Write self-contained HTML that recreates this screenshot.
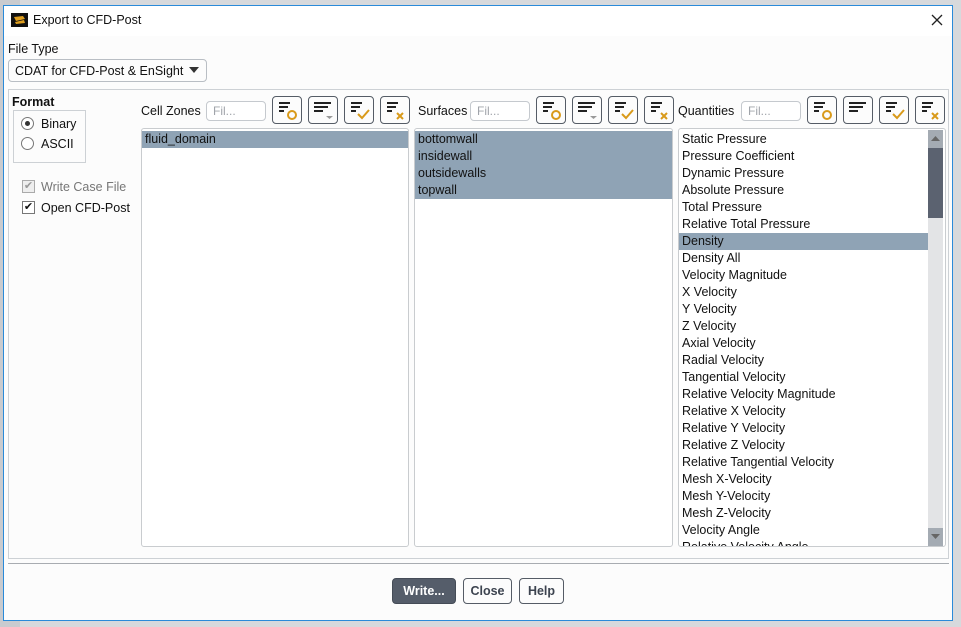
<!DOCTYPE html>
<html><head><meta charset="utf-8"><style>
*{box-sizing:border-box;margin:0;padding:0}
body{width:961px;height:627px;background:#d7d9dc;font-family:"Liberation Sans",sans-serif;font-size:12.5px;color:#111;position:relative;overflow:hidden}
.a{position:absolute}
.dlg{left:3px;top:5px;width:950px;height:616px;background:#fcfcfc;border:1px solid #2a8ad9}
.title{left:0;top:0;width:948px;height:30px;background:#fff}
.btn{position:absolute;width:30px;height:28px;border:1px solid #555c66;border-radius:4px;background:#fcfcfc}
.flt{position:absolute;height:20px;border:1px solid #c5c9ce;border-radius:4px;background:#fff;color:#a0a4aa;padding:2px 6px;font-size:12px}
.list{position:absolute;border:1px solid #c9cccf;border-radius:3px;background:#fff;overflow:hidden;padding-top:2px}
.list div{height:17px;line-height:17px;padding-left:3px;white-space:nowrap}
.sel{background:#8fa3b5}
.pb{position:absolute;top:572px;height:26px;border:1px solid #555c66;border-radius:4px;background:#fcfcfc;font-weight:bold;color:#3d4450;font-size:12.5px;text-align:center;line-height:24px}
</style></head><body>
<div class="a" style="left:0;top:0;width:20px;height:627px;background:#c9cbcf"></div>
<div class="a dlg">
 <div class="a title"></div>
 <div class="a" style="left:7px;top:7px;width:17px;height:14px;background:#111"><svg width="17" height="14"><path d="M3 4 L12 3 L14 6 L5 8Z M4 9 L13 7 L14 10 L5 11Z" fill="#e0a020"/></svg></div>
 <div class="a" style="left:29px;top:7px">Export to CFD-Post</div>
 <svg class="a" style="left:927px;top:8px" width="12" height="12"><path d="M1 1L11 11M11 1L1 11" stroke="#222" stroke-width="1.3"/></svg>
 <div class="a" style="left:4px;top:36px">File Type</div>
 <div class="a" style="left:4px;top:53px;width:199px;height:23px;border:1px solid #b9bec4;border-radius:4px;background:#fcfcfc;padding:4px 6px">CDAT for CFD-Post &amp; EnSight</div>
 <svg class="a" style="left:185px;top:61px" width="10" height="6"><path d="M0 0H10L5 6Z" fill="#333"/></svg>
 <div class="a" style="left:4px;top:83px;width:941px;height:470px;border:1px solid #cdd1d5"></div>
 <div class="a" style="left:8px;top:89px;font-weight:bold">Format</div>
 <div class="a" style="left:9px;top:104px;width:73px;height:53px;border:1px solid #cdd1d5"></div>
 <div class="a" style="left:17px;top:111px;width:13px;height:13px;border:1px solid #777;border-radius:50%;background:#fff"><div class="a" style="left:3px;top:3px;width:5px;height:5px;border-radius:50%;background:#333"></div></div>
 <div class="a" style="left:37px;top:111px">Binary</div>
 <div class="a" style="left:17px;top:131px;width:13px;height:13px;border:1px solid #777;border-radius:50%;background:#fff"></div>
 <div class="a" style="left:37px;top:131px">ASCII</div>
 <div class="a" style="left:18px;top:174px;width:13px;height:13px;border:1px solid #aaa;background:#eee;color:#999;font-size:11px;line-height:11px;text-align:center">✔</div>
 <div class="a" style="left:37px;top:174px;color:#777">Write Case File</div>
 <div class="a" style="left:18px;top:195px;width:13px;height:13px;border:1px solid #777;background:#fff;font-size:11px;line-height:11px;text-align:center">✔</div>
 <div class="a" style="left:37px;top:195px">Open CFD-Post</div>

 <div class="a" style="left:137px;top:98px">Cell Zones</div>
 <div class="flt" style="left:202px;top:95px;width:60px">Fil...</div>
 <div class="a" style="left:414px;top:98px">Surfaces</div>
 <div class="flt" style="left:466px;top:95px;width:60px">Fil...</div>
 <div class="a" style="left:674px;top:98px">Quantities</div>
 <div class="flt" style="left:737px;top:95px;width:60px">Fil...</div>

 <div class="list" style="left:137px;top:122px;width:268px;height:419px"><div class="sel">fluid_domain</div></div>
 <div class="list" style="left:410px;top:122px;width:259px;height:419px"><div class="sel">bottomwall</div><div class="sel">insidewall</div><div class="sel">outsidewalls</div><div class="sel">topwall</div></div>
 <div class="list" style="left:674px;top:122px;width:268px;height:419px">
  <div>Static Pressure</div><div>Pressure Coefficient</div><div>Dynamic Pressure</div><div>Absolute Pressure</div><div>Total Pressure</div><div>Relative Total Pressure</div><div class="sel" style="width:249px">Density</div><div>Density All</div><div>Velocity Magnitude</div><div>X Velocity</div><div>Y Velocity</div><div>Z Velocity</div><div>Axial Velocity</div><div>Radial Velocity</div><div>Tangential Velocity</div><div>Relative Velocity Magnitude</div><div>Relative X Velocity</div><div>Relative Y Velocity</div><div>Relative Z Velocity</div><div>Relative Tangential Velocity</div><div>Mesh X-Velocity</div><div>Mesh Y-Velocity</div><div>Mesh Z-Velocity</div><div>Velocity Angle</div><div>Relative Velocity Angle</div>
  <div class="a" style="left:249px;top:1px;width:15px;height:416px;background:#e3e4e6"></div>
  <div class="a" style="left:249px;top:1px;width:15px;height:18px;background:#a4abb3"></div>
  <div class="a" style="left:249px;top:19px;width:15px;height:70px;background:#5b6270"></div>
  <div class="a" style="left:249px;top:399px;width:15px;height:18px;background:#a4abb3"></div>
  <svg class="a" style="left:252px;top:7px" width="9" height="5"><path d="M0 5H9L4.5 0Z" fill="#666"/></svg>
  <svg class="a" style="left:252px;top:405px" width="9" height="5"><path d="M0 0H9L4.5 5Z" fill="#666"/></svg>
 </div>

 <div class="a" style="left:4px;top:557px;width:941px;border-top:1px solid #a8acb1"></div>
 <div class="pb" style="left:388px;width:64px;background:#555d6a;color:#fff;border-color:#454c57">Write...</div>
 <div class="pb" style="left:459px;width:49px">Close</div>
 <div class="pb" style="left:515px;width:45px">Help</div>
</div>
<div class="btn" style="left:272px;top:96px"><svg width="28" height="26"><path d="M6 6h11M6 10h9M6 14h5" stroke="#222" stroke-width="2"/><circle cx="19" cy="18" r="4" fill="none" stroke="#d99a1a" stroke-width="2"/></svg></div>
<div class="btn" style="left:308px;top:96px"><svg width="28" height="26"><path d="M5 6h17M5 10h14M5 14h9" stroke="#222" stroke-width="2"/><path d="M17 19h7l-3.5 3z" fill="#999"/></svg></div>
<div class="btn" style="left:344px;top:96px"><svg width="28" height="26"><path d="M6 6h11M6 10h9M6 14h5" stroke="#222" stroke-width="2"/><path d="M13 17l4 4l7-8" fill="none" stroke="#d99a1a" stroke-width="2"/></svg></div>
<div class="btn" style="left:380px;top:96px"><svg width="28" height="26"><path d="M6 6h11M6 10h9M6 14h5" stroke="#222" stroke-width="2"/><path d="M16 16l6 6M22 16l-6 6" stroke="#d99a1a" stroke-width="2"/></svg></div>
<div class="btn" style="left:536px;top:96px"><svg width="28" height="26"><path d="M6 6h11M6 10h9M6 14h5" stroke="#222" stroke-width="2"/><circle cx="19" cy="18" r="4" fill="none" stroke="#d99a1a" stroke-width="2"/></svg></div>
<div class="btn" style="left:572px;top:96px"><svg width="28" height="26"><path d="M5 6h17M5 10h14M5 14h9" stroke="#222" stroke-width="2"/><path d="M17 19h7l-3.5 3z" fill="#999"/></svg></div>
<div class="btn" style="left:608px;top:96px"><svg width="28" height="26"><path d="M6 6h11M6 10h9M6 14h5" stroke="#222" stroke-width="2"/><path d="M13 17l4 4l7-8" fill="none" stroke="#d99a1a" stroke-width="2"/></svg></div>
<div class="btn" style="left:644px;top:96px"><svg width="28" height="26"><path d="M6 6h11M6 10h9M6 14h5" stroke="#222" stroke-width="2"/><path d="M16 16l6 6M22 16l-6 6" stroke="#d99a1a" stroke-width="2"/></svg></div>
<div class="btn" style="left:807px;top:96px"><svg width="28" height="26"><path d="M6 6h11M6 10h9M6 14h5" stroke="#222" stroke-width="2"/><circle cx="19" cy="18" r="4" fill="none" stroke="#d99a1a" stroke-width="2"/></svg></div>
<div class="btn" style="left:843px;top:96px"><svg width="28" height="26"><path d="M5 6h17M5 10h14M5 14h9" stroke="#222" stroke-width="2"/></svg></div>
<div class="btn" style="left:879px;top:96px"><svg width="28" height="26"><path d="M6 6h11M6 10h9M6 14h5" stroke="#222" stroke-width="2"/><path d="M13 17l4 4l7-8" fill="none" stroke="#d99a1a" stroke-width="2"/></svg></div>
<div class="btn" style="left:915px;top:96px"><svg width="28" height="26"><path d="M6 6h11M6 10h9M6 14h5" stroke="#222" stroke-width="2"/><path d="M16 16l6 6M22 16l-6 6" stroke="#d99a1a" stroke-width="2"/></svg></div>
</body></html>
